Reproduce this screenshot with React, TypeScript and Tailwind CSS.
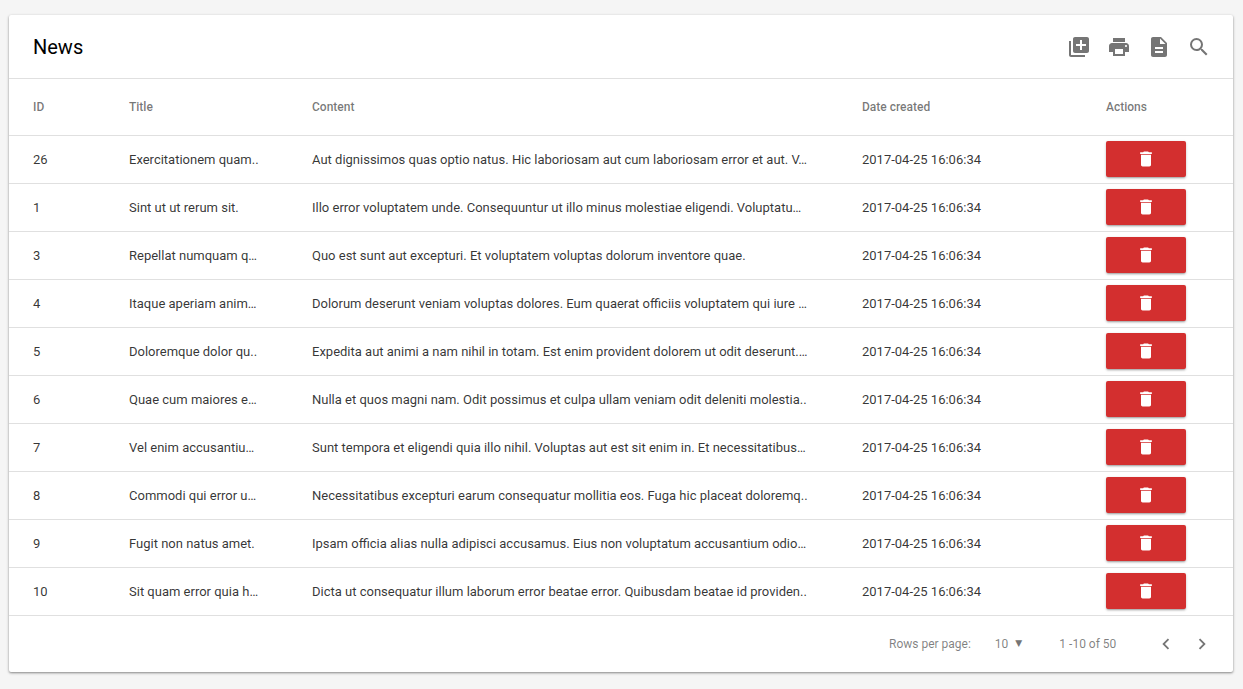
import React from 'react';
import { MdLibraryAdd, MdPrint, MdDescription, MdSearch, MdDelete, MdChevronLeft, MdChevronRight } from 'react-icons/md';

const rows = [
  { id: 26, title: 'Exercitationem quam..', content: 'Aut dignissimos quas optio natus. Hic laboriosam aut cum laboriosam error et aut. V…' },
  { id: 1, title: 'Sint ut ut rerum sit.', content: 'Illo error voluptatem unde. Consequuntur ut illo minus molestiae eligendi. Voluptatu…' },
  { id: 3, title: 'Repellat numquam q…', content: 'Quo est sunt aut excepturi. Et voluptatem voluptas dolorum inventore quae.' },
  { id: 4, title: 'Itaque aperiam anim…', content: 'Dolorum deserunt veniam voluptas dolores. Eum quaerat officiis voluptatem qui iure …' },
  { id: 5, title: 'Doloremque dolor qu..', content: 'Expedita aut animi a nam nihil in totam. Est enim provident dolorem ut odit deserunt.…' },
  { id: 6, title: 'Quae cum maiores e…', content: 'Nulla et quos magni nam. Odit possimus et culpa ullam veniam odit deleniti molestia..' },
  { id: 7, title: 'Vel enim accusantiu…', content: 'Sunt tempora et eligendi quia illo nihil. Voluptas aut est sit enim in. Et necessitatibus…' },
  { id: 8, title: 'Commodi qui error u…', content: 'Necessitatibus excepturi earum consequatur mollitia eos. Fuga hic placeat doloremq..' },
  { id: 9, title: 'Fugit non natus amet.', content: 'Ipsam officia alias nulla adipisci accusamus. Eius non voluptatum accusantium odio…' },
  { id: 10, title: 'Sit quam error quia h…', content: 'Dicta ut consequatur illum laborum error beatae error. Quibusdam beatae id providen..' },
];

const headers = ['ID', 'Title', 'Content', 'Date created', 'Actions'];
const widths = ['w-[96px]', 'w-[183px]', 'w-[550px]', 'w-[244px]', 'w-[151px]'];

const App: React.FC = () => {
  return (
    <div className="min-h-[689px] bg-[#f5f5f5] pt-[15px] pl-[9px] pr-[10px] font-['Roboto',sans-serif]">
      <div className="bg-white rounded-[2px] shadow-[0_1px_3px_rgba(0,0,0,0.3),0_1px_2px_rgba(0,0,0,0.2)]">
        <div className="h-[64px] flex items-center justify-between pl-6 pr-[14px] border-b border-[#e0e0e0]">
          <h2 className="text-[20px] text-black">News</h2>
          <div className="flex text-[#757575]">
            <button className="w-10 h-10 flex items-center justify-center"><MdLibraryAdd size={24} /></button>
            <button className="w-10 h-10 flex items-center justify-center"><MdPrint size={24} /></button>
            <button className="w-10 h-10 flex items-center justify-center"><MdDescription size={24} /></button>
            <button className="w-10 h-10 flex items-center justify-center"><MdSearch size={24} /></button>
          </div>
        </div>

        <table className="w-full table-fixed border-collapse">
          <colgroup>
            {widths.map((w) => <col key={w} className={w} />)}
          </colgroup>
          <thead>
            <tr className="h-[56px] border-b border-[#e0e0e0]">
              {headers.map((h) => (
                <th key={h} className="pl-6 pt-px text-left text-[12px] font-medium text-black/[.54]">{h}</th>
              ))}
            </tr>
          </thead>
          <tbody className="text-[13px] text-black/[.8]">
            {rows.map((r) => (
              <tr key={r.id} className="h-12 border-b border-[#e0e0e0]">
                <td className="pl-6 pt-[2px]">{r.id}</td>
                <td className="pl-6 pt-[2px] whitespace-nowrap">{r.title}</td>
                <td className="pl-6 pt-[2px] whitespace-nowrap">{r.content}</td>
                <td className="pl-6 pt-[2px]">2017-04-25 16:06:34</td>
                <td className="pl-6">
                  <button className="w-20 h-9 flex items-center justify-center bg-[#d32f2f] text-white rounded-[2px] shadow-[0_1px_3px_rgba(0,0,0,0.2),0_2px_2px_-1px_rgba(0,0,0,0.25)]">
                    <MdDelete size={20} />
                  </button>
                </td>
              </tr>
            ))}
          </tbody>
        </table>

        <div className="h-[56px] flex items-center text-[12px] text-black/[.5]">
          <span className="ml-[880px]">Rows per page:</span>
          <span className="ml-6">10</span>
          <span className="ml-[7px] w-[7px] text-[9px] text-[#757575] font-['DejaVu_Sans',sans-serif]">▼</span>
          <span className="ml-[37px]">1 -10 of 50</span>
          <div className="ml-[32px] flex text-[#757575]">
            <button className="w-9 h-9 flex items-center justify-center"><MdChevronLeft size={22} /></button>
            <button className="w-9 h-9 flex items-center justify-center"><MdChevronRight size={22} /></button>
          </div>
        </div>
      </div>
    </div>
  );
};

export default App;
